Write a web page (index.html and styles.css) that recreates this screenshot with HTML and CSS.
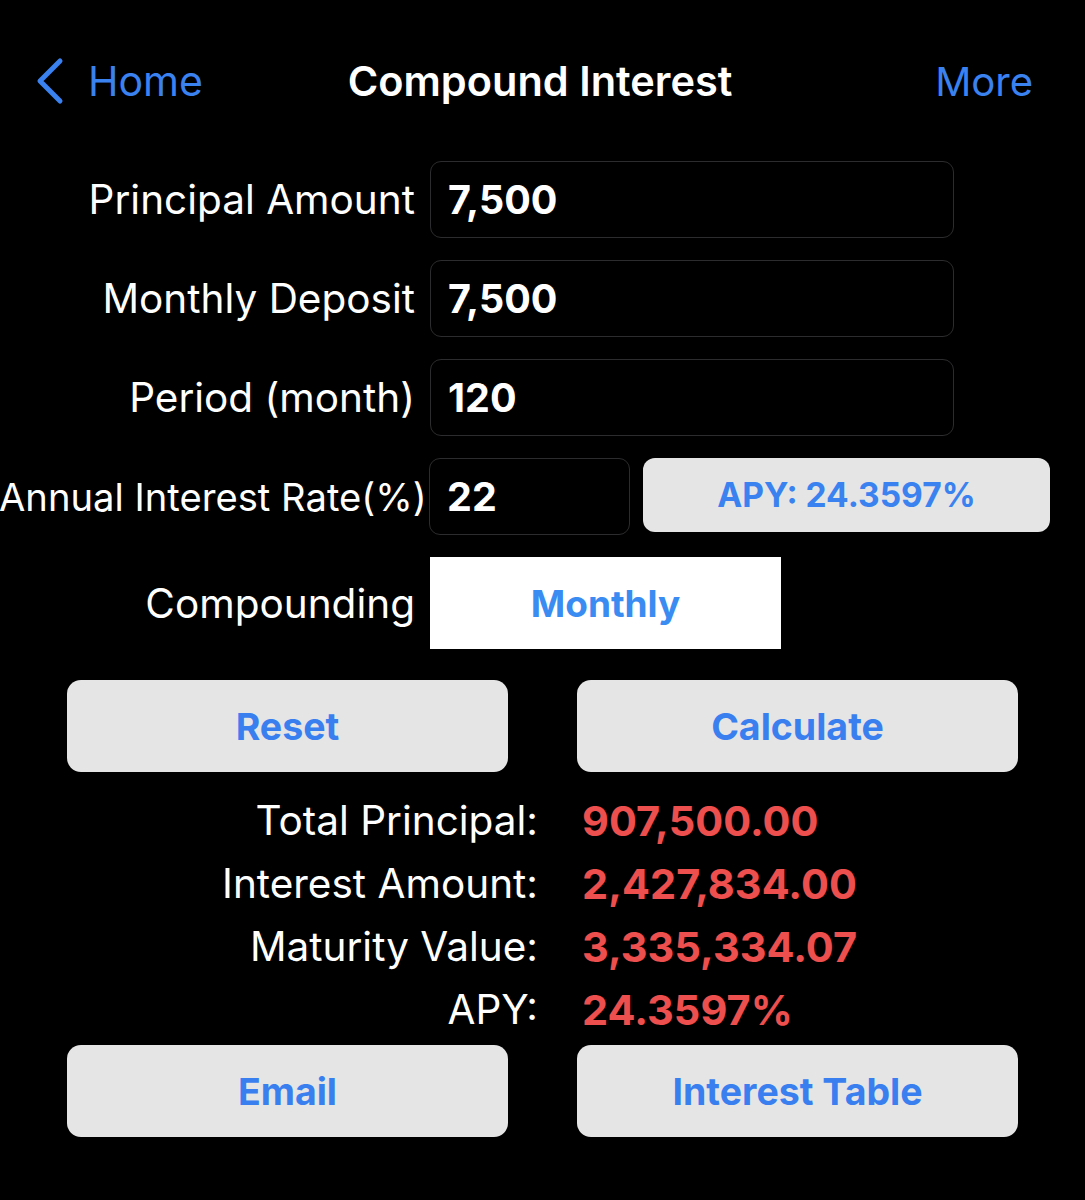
FILE: index.html
```html
<!DOCTYPE html>
<html lang="en">
  <head>
    <meta charset="UTF-8" />
    <meta name="viewport" content="width=device-width, initial-scale=1.0" />
    <title>Compound Interest</title>
    <link rel="stylesheet" href="styles.css">
  </head>
  <body>
    <!-- Navigation bar -->
    <div class="nav">
      <a class="nav-back">
        <svg width="30" height="48" viewBox="0 0 30 48">
          <path d="M25 4 L5 24 L25 44" fill="none" stroke="#3a82f0" stroke-width="5" stroke-linecap="round" stroke-linejoin="round" />
        </svg>
        <span>Home</span>
      </a>
      <div class="nav-title">Compound Interest</div>
      <a class="nav-more">More</a>
    </div>

    <!-- Inputs -->
    <div class="form">
      <div class="row">
        <div class="label">Principal Amount</div>
        <div class="field wide">7,500</div>
      </div>
      <div class="row">
        <div class="label">Monthly Deposit</div>
        <div class="field wide">7,500</div>
      </div>
      <div class="row">
        <div class="label">Period (month)</div>
        <div class="field wide">120</div>
      </div>
      <div class="row">
        <div class="label long">Annual Interest Rate(%)</div>
        <div class="field short">22</div>
        <button class="apy-btn">APY: 24.3597%</button>
      </div>
      <div class="row compounding">
        <div class="label">Compounding</div>
        <div class="picker">Monthly</div>
      </div>
    </div>

    <div class="actions">
      <button class="btn">Reset</button>
      <button class="btn">Calculate</button>
    </div>

    <!-- Results -->
    <div class="results">
      <div class="result-label">Total Principal:</div>
      <div class="result-value">907,500.00</div>
      <div class="result-label">Interest Amount:</div>
      <div class="result-value">2,427,834.00</div>
      <div class="result-label">Maturity Value:</div>
      <div class="result-value">3,335,334.07</div>
      <div class="result-label">APY:</div>
      <div class="result-value">24.3597%</div>
    </div>

    <div class="actions bottom">
      <button class="btn">Email</button>
      <button class="btn">Interest Table</button>
    </div>
  </body>
</html>
```

FILE: styles.css
```css
body {
  margin: 0;
  background-color: #000;
  color: #fff;
  font-family: Inter, "Noto Sans", sans-serif;
  width: 1085px;
  height: 1200px;
  overflow: hidden;
}

.nav {
  display: grid;
  grid-template-columns: 1fr auto 1fr;
  align-items: center;
  height: 80px;
  padding: 41px 52px 0 35px;
}

.nav-back {
  display: flex;
  align-items: center;
  gap: 23px;
  color: #3a82f0;
  font-size: 41px;
}

.nav-back svg {
  display: block;
}

.nav-title {
  font-size: 41.5px;
  font-weight: 600;
  margin-left: 12px;
}

.nav-more {
  justify-self: end;
  color: #3a82f0;
  font-size: 40px;
}

.form {
  display: flex;
  flex-direction: column;
  gap: 22px;
  margin-top: 40px;
}

.row {
  display: flex;
  align-items: center;
  height: 77px;
}

.label {
  width: 415px;
  text-align: right;
  font-size: 40.5px;
  white-space: nowrap;
  flex-shrink: 0;
}

.label.long {
  width: 426px;
  margin-left: -1px;
  font-size: 38.2px;
}

.field {
  box-sizing: border-box;
  height: 77px;
  margin-left: 15px;
  border: 1.5px solid #2c2c2e;
  border-radius: 11px;
  padding-left: 17px;
  display: flex;
  align-items: center;
  font-size: 39.5px;
  font-weight: 700;
}

.field.wide {
  width: 524px;
}

.field.short {
  width: 201px;
  margin-left: 4px;
}

.apy-btn {
  margin-left: 13px;
  width: 407px;
  height: 74px;
  margin-top: -3px;
  border: none;
  border-radius: 12px;
  background-color: #e5e5e5;
  color: #3a82f0;
  font-family: Inter, sans-serif;
  font-size: 33.5px;
  font-weight: 700;
}

.row.compounding {
  height: 92px;
}

.picker {
  margin-left: 15px;
  width: 351px;
  height: 92px;
  background-color: #fff;
  color: #3a8cf2;
  display: flex;
  align-items: center;
  justify-content: center;
  font-family: Inter, sans-serif;
  font-size: 37px;
  font-weight: 700;
}

.actions {
  display: flex;
  gap: 69px;
  padding-left: 67px;
  margin-top: 31px;
}

.btn {
  width: 441px;
  height: 92px;
  border: none;
  border-radius: 14px;
  background-color: #e5e5e5;
  color: #3a7ff0;
  font-family: Inter, sans-serif;
  font-size: 37.5px;
  font-weight: 700;
}

.results {
  display: grid;
  grid-template-columns: 538px auto;
  column-gap: 44px;
  grid-auto-rows: 63px;
  align-items: center;
  margin-top: 17px;
}

.result-label {
  text-align: right;
  font-size: 40.5px;
}

.result-value {
  color: #ec4f4d;
  font-size: 41.5px;
  font-weight: 700;
}

.actions.bottom {
  margin-top: 4px;
}
```
